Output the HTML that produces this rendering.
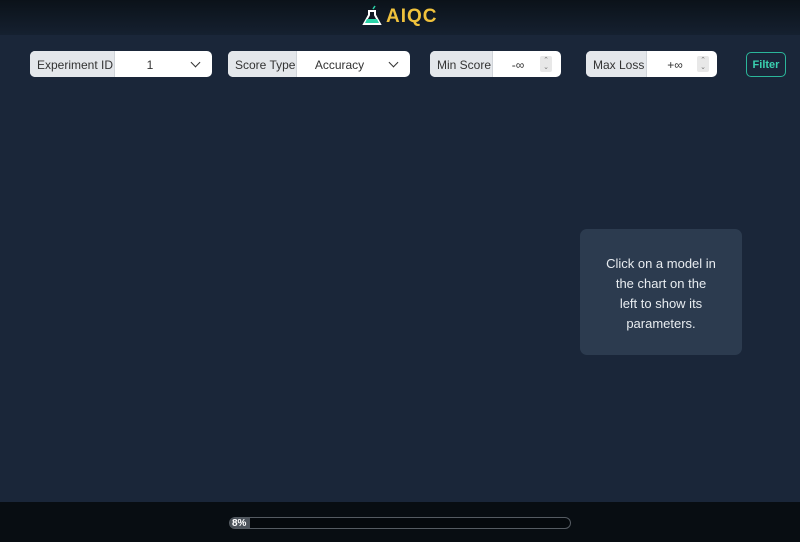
<!DOCTYPE html>
<html><head><meta charset="utf-8"><style>
*{margin:0;padding:0;box-sizing:border-box}
body{width:800px;height:542px;overflow:hidden;background:#1a2639;font-family:"Liberation Sans",sans-serif;position:relative}
.hdr{position:absolute;left:0;top:0;width:800px;height:35px;background:linear-gradient(#0b1219,#152030);}
.logo{position:absolute;left:362px;top:5px;color:#f0c23c;font-weight:bold;font-size:19px;letter-spacing:1px}
.logo span{position:absolute;left:24px;top:1px}
.grp{position:absolute;top:51px;height:26px;border-radius:5px;background:#fff;overflow:hidden;font-size:12px;color:#333;white-space:nowrap}
.grp .l{position:absolute;left:0;top:0;height:26px;background:#e4e7eb;border-right:1px solid #d0d4d9;line-height:28px;padding-left:7px}
.grp .v{position:absolute;top:0;line-height:28px;text-align:center}
.chev{position:absolute;top:8px;width:7px;height:7px;border-right:1.5px solid #333;border-bottom:1.5px solid #333;transform:rotate(45deg)}
.spin{position:absolute;top:5px;width:12px;height:16px;background:#e8e8e8;border-radius:2px;font-size:7px;color:#777;text-align:center;line-height:7px;padding-top:1px}
.btn{position:absolute;left:746px;top:52px;width:40px;height:25px;border:1.5px solid #2bb69a;border-radius:5px;color:#3ad1b0;font-size:11px;font-weight:bold;text-align:center;line-height:24px}
.card{position:absolute;left:580px;top:229px;width:162px;height:126px;background:#2c3b4f;border-radius:7px;color:#e8ecf0;font-size:13px;text-align:center;line-height:20px;padding-top:25px}
.ftr{position:absolute;left:0;top:502px;width:800px;height:40px;background:#080d12}
.bar{position:absolute;left:229px;top:517px;width:342px;height:12px;border:1px solid #555b62;border-radius:6px;background:#05090d;overflow:hidden}
.bar div{width:20px;height:12px;background:#4d545c;color:#fff;font-size:10px;font-weight:bold;line-height:11px;padding-left:2px}
</style></head><body>
<div class="hdr"></div>
<div class="logo">
<svg width="20" height="22" viewBox="0 0 20 22" style="position:absolute;left:0;top:0">
<path d="M7 6 V10 L2 19 H18 L13 10 V6" fill="none" stroke="#fff" stroke-width="2"/>
<path d="M5 14 H15 L17 18 H3Z" fill="#2bd3a8"/>
<path d="M6 6 H14" stroke="#fff" stroke-width="2"/>
<path d="M11 4 L13 1" stroke="#2bd3a8" stroke-width="1.5"/>
</svg><span>AIQC</span></div>

<div class="grp" style="left:30px;width:182px"><div class="l" style="width:85px">Experiment ID</div><div class="v" style="left:85px;width:70px">1</div><div class="chev" style="left:162px"></div></div>
<div class="grp" style="left:228px;width:182px"><div class="l" style="width:69px">Score Type</div><div class="v" style="left:69px;width:85px">Accuracy</div><div class="chev" style="left:162px"></div></div>
<div class="grp" style="left:430px;width:131px"><div class="l" style="width:63px">Min Score</div><div class="v" style="left:63px;width:50px">-∞</div><div class="spin" style="left:110px">⌃<br>⌄</div></div>
<div class="grp" style="left:586px;width:131px"><div class="l" style="width:61px">Max Loss</div><div class="v" style="left:61px;width:56px">+∞</div><div class="spin" style="left:111px">⌃<br>⌄</div></div>
<div class="btn">Filter</div>

<div class="card">Click on a model in<br>the chart on the<br>left to show its<br>parameters.</div>

<div class="ftr"></div>
<div class="bar"><div>8%</div></div>
</body></html>
